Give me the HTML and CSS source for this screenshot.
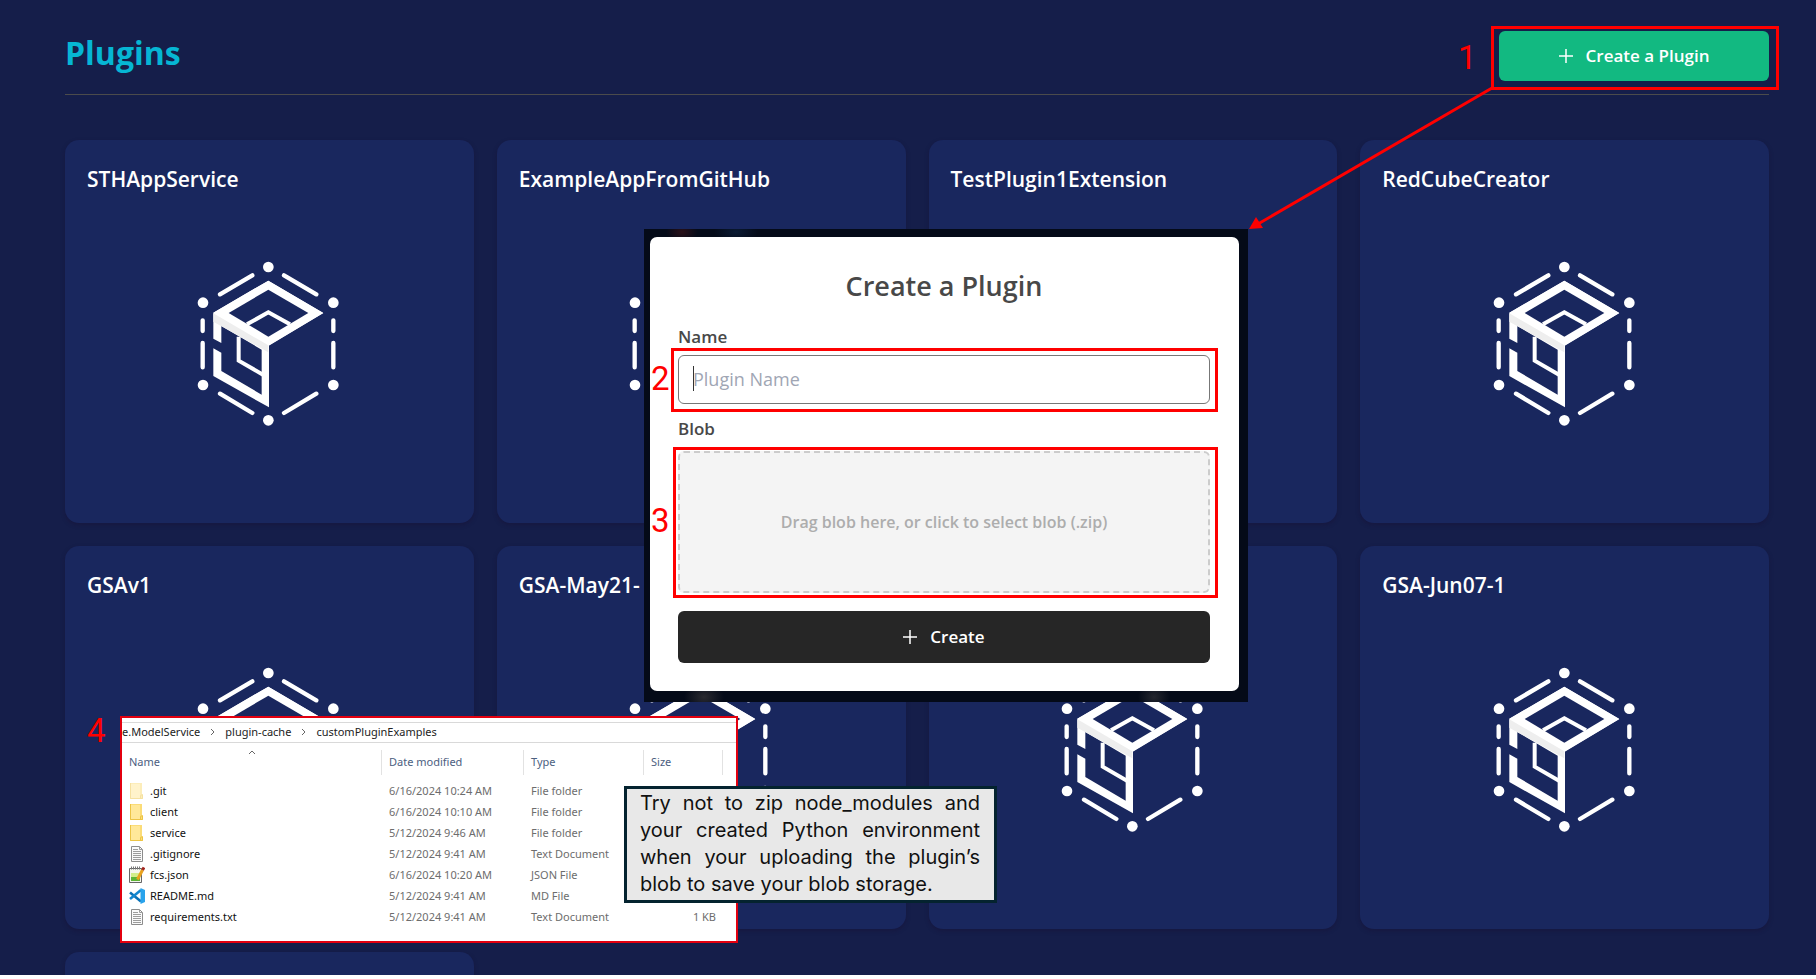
FILE: index.html
```html
<!DOCTYPE html>
<html lang="en">
<head>
<meta charset="utf-8">
<title>Plugins</title>
<link rel="stylesheet" href="styles.css">
</head>
<body>
<svg class="symbols" aria-hidden="true">
  <symbol id="cube" viewBox="0 0 600 600">
    <g fill="#fff">
      <circle cx="298" cy="81" r="16"/><circle cx="493" cy="188" r="16"/><circle cx="493" cy="435" r="16"/>
      <circle cx="298" cy="541" r="16"/><circle cx="102" cy="435" r="16"/><circle cx="102" cy="188" r="16"/>
    </g>
    <g stroke="#fff" stroke-width="13" stroke-linecap="round" fill="none">
      <path d="M153 163 250 106M345 106 442 163M153 461 250 519M345 519 442 461M101 241V273M101 309V382M493 241V273M493 309V382"/>
    </g>
    <path fill="#fff" d="M133 218 298 122 463 219 300 316V502L133 408V325L157 338V393L278 464V329L157 258V309L133 296Z"/>
    <path fill="#fff" d="M133 218 298 122 463 219 298 318Z"/>
    <path fill="#eee" d="M133 220 298 316V337L133 245Z"/>
    <path fill="#19275e" d="M179 219 298 149 418 219 298 290Z"/>
    <path fill="none" stroke="#fff" stroke-width="12" d="M234 253 298 217 363 253M209 290V362L282 404"/>
  </symbol>
  <symbol id="plus" viewBox="0 0 14 14"><path d="M7 0V14M0 7H14" stroke="currentColor" stroke-width="1.5" fill="none"/></symbol>
  <symbol id="folder" viewBox="0 0 16 18"><path fill="#fbdc77" d="M1 1H13V13L14 14V17H1Z"/><path fill="#ffe899" d="M2 2H11V16H2Z"/><path fill="none" stroke="#ecc445" d="M1.500 1V16.500H13.500V12.500L11.500 13.500V16"/></symbol>
  <symbol id="doc" viewBox="0 0 16 18"><path fill="#fafafa" stroke="#8c8c8c" d="M2.500 1.500H10.500L13.500 4.500V16.500H2.500Z"/><path fill="none" stroke="#9c9c9c" d="M10.500 1.500V4.500H13.500M4 4.500H9M4 6.500H12M4 8.500H12M4 10.500H12M4 12.500H12M4 14.500H12"/></symbol>
  <symbol id="notepad" viewBox="0 0 16 18"><path fill="#f4f6ee" stroke="#666" d="M.5 2.500H12.500V16.500H.5Z"/><path fill="#d2ee8a" d="M2 7H11V11H2Z"/><path fill="#5db536" d="M2 11H11V15H2Z"/><path stroke="#777" stroke-dasharray="1 1" stroke-width="3" d="M2 2H12"/><path stroke="#e9a21e" stroke-width="3" d="M8.500 13.500 13.500 4"/><path stroke="#a2251d" stroke-width="3" d="M13.500 4 15 1.500"/></symbol>
  <symbol id="vscode" viewBox="0 0 16 18"><path fill="none" stroke="#0a72b8" stroke-width="2.600" stroke-linejoin="round" d="M1 5.500 12 14.500"/><path fill="none" stroke="#1287d0" stroke-width="2.600" d="M1 12 12 3"/><path fill="#29a3ec" d="M11.500 1 16 3V15L11.500 17Z"/></symbol>
</svg>

<main class="app">
  <header class="page-header">
    <h1 class="page-title">Plugins</h1>
    <div class="callout callout-create">
      <button class="button button-green" type="button"><svg class="plus"><use href="#plus"/></svg>Create a Plugin</button>
      <span class="step step-1">1</span>
    </div>
  </header>
  <section class="grid">
    <article class="card"><h2 class="card-title">STHAppService</h2><svg class="cube"><use href="#cube"/></svg></article>
    <article class="card"><h2 class="card-title">ExampleAppFromGitHub</h2><svg class="cube"><use href="#cube"/></svg></article>
    <article class="card"><h2 class="card-title">TestPlugin1Extension</h2><svg class="cube"><use href="#cube"/></svg></article>
    <article class="card"><h2 class="card-title">RedCubeCreator</h2><svg class="cube"><use href="#cube"/></svg></article>
    <article class="card"><h2 class="card-title">GSAv1</h2><svg class="cube"><use href="#cube"/></svg></article>
    <article class="card"><h2 class="card-title">GSA-May21-</h2><svg class="cube"><use href="#cube"/></svg></article>
    <article class="card"><h2 class="card-title"></h2><svg class="cube"><use href="#cube"/></svg></article>
    <article class="card"><h2 class="card-title">GSA-Jun07-1</h2><svg class="cube"><use href="#cube"/></svg></article>
    <article class="card"></article>
  </section>
</main>

<div class="backdrop">
  <form class="dialog">
    <h2 class="dialog-title">Create a Plugin</h2>
    <label class="label" for="plugin-name">Name</label>
    <div class="callout callout-name">
      <input class="input" id="plugin-name" type="text" placeholder="Plugin Name">
      <span class="caret"></span>
      <span class="step step-side">2</span>
    </div>
    <label class="label label-blob" for="plugin-blob">Blob</label>
    <div class="callout callout-blob">
      <button class="dropzone" id="plugin-blob" type="button">Drag blob here, or click to select blob (.zip)</button>
      <span class="step step-side">3</span>
    </div>
    <button class="button button-dark" type="button"><svg class="plus"><use href="#plus"/></svg>Create</button>
  </form>
</div>

<svg class="arrow" viewBox="0 0 250 150" aria-hidden="true"><path d="M246 3 12 139" stroke="#f00" stroke-width="3"/><path d="M3 144 10 132 17 143Z" fill="#f00"/></svg>

<span class="step step-4">4</span>
<section class="explorer">
  <nav class="crumbs"><span>e.ModelService</span><svg class="chevron" viewBox="0 0 5 8"><path d="M1 1 4 4 1 7"/></svg><span>plugin-cache</span><svg class="chevron" viewBox="0 0 5 8"><path d="M1 1 4 4 1 7"/></svg><span>customPluginExamples</span></nav>
  <table class="files">
    <colgroup><col class="col-name"><col class="col-date"><col class="col-type"><col class="col-size"><col></colgroup>
    <thead><tr>
      <th><div class="head">Name<svg class="sort" viewBox="0 0 8 5"><path d="M1 4 4 1 7 4"/></svg></div></th>
      <th><div class="head">Date modified</div></th><th><div class="head">Type</div></th><th><div class="head">Size</div></th><th></th>
    </tr></thead>
    <tbody>
      <tr><td><div class="file"><svg class="icon faded"><use href="#folder"/></svg>.git</div></td><td>6/16/2024 10:24 AM</td><td>File folder</td><td></td><td></td></tr>
      <tr><td><div class="file"><svg class="icon"><use href="#folder"/></svg>client</div></td><td>6/16/2024 10:10 AM</td><td>File folder</td><td></td><td></td></tr>
      <tr><td><div class="file"><svg class="icon"><use href="#folder"/></svg>service</div></td><td>5/12/2024 9:46 AM</td><td>File folder</td><td></td><td></td></tr>
      <tr><td><div class="file"><svg class="icon"><use href="#doc"/></svg>.gitignore</div></td><td>5/12/2024 9:41 AM</td><td>Text Document</td><td></td><td></td></tr>
      <tr><td><div class="file"><svg class="icon"><use href="#notepad"/></svg>fcs.json</div></td><td>6/16/2024 10:20 AM</td><td>JSON File</td><td></td><td></td></tr>
      <tr><td><div class="file"><svg class="icon"><use href="#vscode"/></svg>README.md</div></td><td>5/12/2024 9:41 AM</td><td>MD File</td><td></td><td></td></tr>
      <tr><td><div class="file"><svg class="icon"><use href="#doc"/></svg>requirements.txt</div></td><td>5/12/2024 9:41 AM</td><td>Text Document</td><td class="size">1 KB</td><td></td></tr>
    </tbody>
  </table>
</section>

<p class="note">Try not to zip node_modules and your created Python environment when your uploading the plugin’s blob to save your blob storage.</p>
</body>
</html>
```
FILE: styles.css
```css
* { box-sizing: border-box; }
body {
  margin: 0;
  position: relative;
  height: 100vh;
  overflow: hidden;
  background: #fff;
  font-family: "Open Sans", "Noto Sans", sans-serif;
}
h1, h2, p { margin: 0; }
button, input { font: inherit; }
.symbols { position: absolute; width: 0; height: 0; }

.app {
  height: calc(100vh - 4px);
  overflow: hidden;
  padding: 31px 47px 0 65px;
  background: #151e4a;
}
.page-header {
  display: flex;
  justify-content: space-between;
  align-items: flex-start;
  height: 64px;
  border-bottom: 1px solid #4b4b4b;
}
.page-title { font-size: 32px; line-height: 44px; font-weight: 700; color: #06b6d4; }
.grid {
  display: grid;
  grid-template-columns: repeat(4, 1fr);
  gap: 23px;
  padding-top: 45px;
}
.card {
  display: flex;
  flex-direction: column;
  min-height: 383px;
  padding: 24px 22px;
  border-radius: 14px;
  background: #19275e;
  box-shadow: 0 2px 4px rgba(24, 16, 50, .4);
}
.card-title { height: 30px; font-size: 21px; line-height: 31px; font-weight: 600; color: #fff; }
.cube { width: 200px; height: 200px; margin-top: 46px; align-self: center; }

.button {
  display: flex;
  align-items: center;
  justify-content: center;
  gap: 13px;
  padding: 0 0 1px;
  border: 0;
  border-radius: 6px;
  color: #fff;
  font-size: 17px;
  font-weight: 600;
}
.plus { width: 14px; height: 14px; }
.button-green { width: 270px; height: 50px; background: #12b981; }
.button-dark { width: 100%; height: 52px; margin-top: 18px; background: #262626; }

.callout { position: relative; }
.callout::after {
  content: "";
  position: absolute;
  inset: -5px -10px -9px -8px;
  border: 3px solid #f00;
  pointer-events: none;
}
.callout-name::after { inset: -7px -8px -8px -7px; }
.callout-blob::after { inset: -4px -8px -5px -5px; }
.step {
  position: absolute;
  font-family: Roboto, "Open Sans", sans-serif;
  font-size: 33px;
  line-height: 40px;
  color: #f00;
}
.step-1 { left: -41px; top: 7px; }
.step-side { left: -27px; top: calc(50% - 21px); }
.step-4 { left: 87px; top: 711px; }

.backdrop {
  position: absolute;
  left: 644px;
  top: 229px;
  width: 604px;
  padding: 8px 9px 11px 6px;
  background:
    radial-gradient(ellipse 16px 10px at 38px 3px, #2a1018, transparent),
    radial-gradient(ellipse 22px 10px at 92px 3px, #0a1a33, transparent),
    radial-gradient(ellipse 20px 14px at 60px 468px, #2a2a30, transparent),
    radial-gradient(ellipse 16px 14px at 510px 468px, #24262e, transparent),
    #040a18;
}
.dialog { padding: 31px 29px 28px 28px; border-radius: 7px; background: #fff; color: #484848; }
.dialog-title { margin-bottom: 21px; font-size: 27px; line-height: 36px; font-weight: 600; text-align: center; }
.label { display: block; margin-bottom: 6px; font-size: 17px; line-height: 24px; font-weight: 600; }
.label-blob { margin: 13px 0 10px; }
.input {
  display: block;
  width: 100%;
  height: 49px;
  padding: 0 14px 1px;
  border: 1px solid #777;
  border-radius: 6px;
  background: #fff;
  font-size: 18px;
}
.input::placeholder { color: #a0a6b4; opacity: 1; }
.caret { position: absolute; left: 15px; top: 11px; width: 1px; height: 25px; background: #333; }
.dropzone {
  display: block;
  width: 100%;
  height: 142px;
  border: 2px dashed #ccc;
  border-radius: 6px;
  background: #f4f4f4;
  color: #adadad;
  font-size: 16px;
  font-weight: 600;
}
.arrow { position: absolute; left: 1246px; top: 85px; width: 250px; height: 150px; }

.explorer {
  position: absolute;
  left: 120px;
  top: 716px;
  width: 618px;
  height: 227px;
  padding-top: 4px;
  border: 2px solid #e3000f;
  background: #fff;
  font-family: "Noto Sans", "Open Sans", sans-serif;
  font-size: 11px;
  white-space: nowrap;
}
.crumbs {
  display: flex;
  align-items: center;
  gap: 10px;
  height: 21px;
  border: solid #d9d9d9;
  border-width: 1px 0;
  padding-bottom: 2px;
  color: #222;
}
.chevron { width: 5px; height: 8px; fill: none; stroke: #666; }
.files { width: 100%; table-layout: fixed; border-collapse: collapse; }
.col-name { width: 260px; }
.col-date { width: 142px; }
.col-type { width: 120px; }
.col-size { width: 79px; }
.files th { padding: 7px 0 5px; font-weight: 400; text-align: left; color: #4c607f; }
.head { position: relative; height: 25px; padding-left: 7px; border-right: 1px solid #e2e2e2; line-height: 24px; }
.sort { position: absolute; left: 126px; top: 0; width: 8px; height: 5px; fill: none; stroke: #666; }
.files td { height: 21px; padding: 0 7px; line-height: 20px; color: #6d6d6d; }
.files .size { text-align: right; }
.file { display: flex; align-items: center; gap: 5px; height: 20px; color: #111; }
.icon { width: 16px; height: 18px; }
.faded { opacity: .5; }

.note {
  position: absolute;
  left: 624px;
  top: 786px;
  width: 373px;
  padding: 1px 14px 2px 13px;
  border: 3px solid #04232f;
  background: #e8e8e8;
  color: #111;
  font-family: Inter, "Open Sans", sans-serif;
  font-size: 20px;
  line-height: 27px;
  text-align: justify;
}
```
